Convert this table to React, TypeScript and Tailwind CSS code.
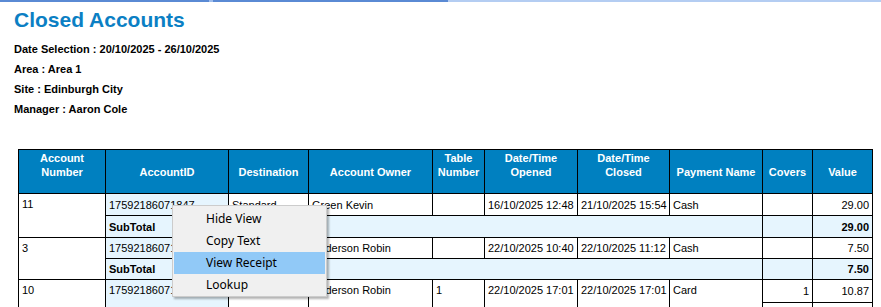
import React from "react";

type Row = {
  num?: string;
  id?: string;
  dest?: string;
  owner?: string;
  table?: string;
  opened?: string;
  closed?: string;
  payment?: string;
  covers?: string;
  value: string;
};

const headers = [
  ["Account", "Number"],
  ["AccountID"],
  ["Destination"],
  ["Account Owner"],
  ["Table", "Number"],
  ["Date/Time", "Opened"],
  ["Date/Time", "Closed"],
  ["Payment Name"],
  ["Covers"],
  ["Value"],
];

const colWidths = [87, 123, 80, 124, 52, 93, 92, 93, 50, 60];

const menuItems = ["Hide View", "Copy Text", "View Receipt", "Lookup"];

const td = "border border-black px-[3px] py-0 align-middle whitespace-nowrap overflow-hidden";

function AccountRows({ row, subtotal, h }: { row: Row; subtotal: string; h: [string, string] }) {
  return (
    <>
      <tr className={h[0]}>
        <td rowSpan={2} className={`${td} align-top pt-[3px] bg-white`}>{row.num}</td>
        <td className={`${td} bg-[#e6f5fe]`}>{row.id}</td>
        <td className={`${td} bg-white`}>{row.dest}</td>
        <td className={`${td} bg-white`}>{row.owner}</td>
        <td className={`${td} bg-white`}>{row.table}</td>
        <td className={`${td} bg-white`}>{row.opened}</td>
        <td className={`${td} bg-white`}>{row.closed}</td>
        <td className={`${td} bg-white`}>{row.payment}</td>
        <td className={`${td} bg-white text-right`}>{row.covers}</td>
        <td className={`${td} bg-white text-right`}>{row.value}</td>
      </tr>
      <tr className={h[1]}>
        <td colSpan={7} className={`${td} bg-[#e6f5fe] font-bold`}>SubTotal</td>
        <td className={`${td} bg-[#e6f5fe]`}></td>
        <td className={`${td} bg-[#e6f5fe] text-right font-bold`}>{subtotal}</td>
      </tr>
    </>
  );
}

export default function App() {
  return (
    <div className="relative w-[881px] h-[307px] overflow-hidden bg-white text-black font-['Liberation_Sans',Arial,sans-serif]">
      <div className="flex h-[2px]">
        <div className="w-[209px] bg-[#5a8ad4]" />
        <div className="w-[4px] bg-[#9dbcec]" />
        <div className="w-[235px] bg-[#5a8ad4]" />
        <div className="flex-1 bg-[#b4cdf2]" />
      </div>

      <div className="pl-[14px] pt-[6px]">
        <h1 className="text-[21px] leading-[24px] font-bold text-[#0b7fc4]">Closed Accounts</h1>
        <div className="mt-[7px] text-[11px] leading-[20px] font-bold">
          <div>Date Selection : 20/10/2025 - 26/10/2025</div>
          <div>Area : Area 1</div>
          <div>Site : Edinburgh City</div>
          <div>Manager : Aaron Cole</div>
        </div>
      </div>

      <table className="ml-[18px] mt-[30px] w-[854px] table-fixed border-collapse text-[11px] leading-[14px]">
        <colgroup>
          {colWidths.map((w, i) => (
            <col key={i} style={{ width: w }} />
          ))}
        </colgroup>
        <thead>
          <tr className="h-[43px]">
            {headers.map((lines, i) => (
              <th
                key={i}
                className="border border-black bg-[#0080c0] text-white font-bold text-center align-bottom pt-[1px] pb-[14px] px-0 whitespace-nowrap"
              >
                {lines.map((l) => (
                  <div key={l}>{l}</div>
                ))}
              </th>
            ))}
          </tr>
        </thead>
        <tbody>
          <AccountRows
            h={["h-[22px]", "h-[22px]"]}
            subtotal="29.00"
            row={{
              num: "11",
              id: "17592186071847",
              dest: "Standard",
              owner: "Green Kevin",
              opened: "16/10/2025 12:48",
              closed: "21/10/2025 15:54",
              payment: "Cash",
              value: "29.00",
            }}
          />
          <AccountRows
            h={["h-[21px]", "h-[21px]"]}
            subtotal="7.50"
            row={{
              num: "3",
              id: "17592186071852",
              dest: "Standard",
              owner: "Anderson Robin",
              opened: "22/10/2025 10:40",
              closed: "22/10/2025 11:12",
              payment: "Cash",
              value: "7.50",
            }}
          />
          <tr className="h-[23px]">
            <td rowSpan={2} className={`${td} align-top pt-[3px]`}>10</td>
            <td rowSpan={2} className={`${td} align-top pt-[3px] bg-[#e6f5fe]`}>17592186071861</td>
            <td rowSpan={2} className={`${td} align-top pt-[3px]`}>Standard</td>
            <td rowSpan={2} className={`${td} align-top pt-[3px]`}>Anderson Robin</td>
            <td rowSpan={2} className={`${td} align-top pt-[3px]`}>1</td>
            <td rowSpan={2} className={`${td} align-top pt-[3px]`}>22/10/2025 17:01</td>
            <td rowSpan={2} className={`${td} align-top pt-[3px]`}>22/10/2025 17:01</td>
            <td rowSpan={2} className={`${td} align-top pt-[3px]`}>Card</td>
            <td className={`${td} text-right`}>1</td>
            <td className={`${td} text-right`}>10.87</td>
          </tr>
          <tr className="h-[22px]">
            <td className={td}></td>
            <td className={td}></td>
          </tr>
        </tbody>
      </table>

      <div className="absolute left-[172px] top-[205px] w-[155px] border border-[#cccccc] bg-[#f0f0f0] pt-[2px] pb-0 px-[1px] shadow-[2px_2px_2px_rgba(0,0,0,0.3)] font-['Noto_Sans',sans-serif] text-[12px]">
        {menuItems.map((item) => (
          <div
            key={item}
            className={`h-[22px] flex items-center pl-[32px] ${item === "View Receipt" ? "bg-[#91c9f7]" : ""}`}
          >
            {item}
          </div>
        ))}
      </div>
    </div>
  );
}
